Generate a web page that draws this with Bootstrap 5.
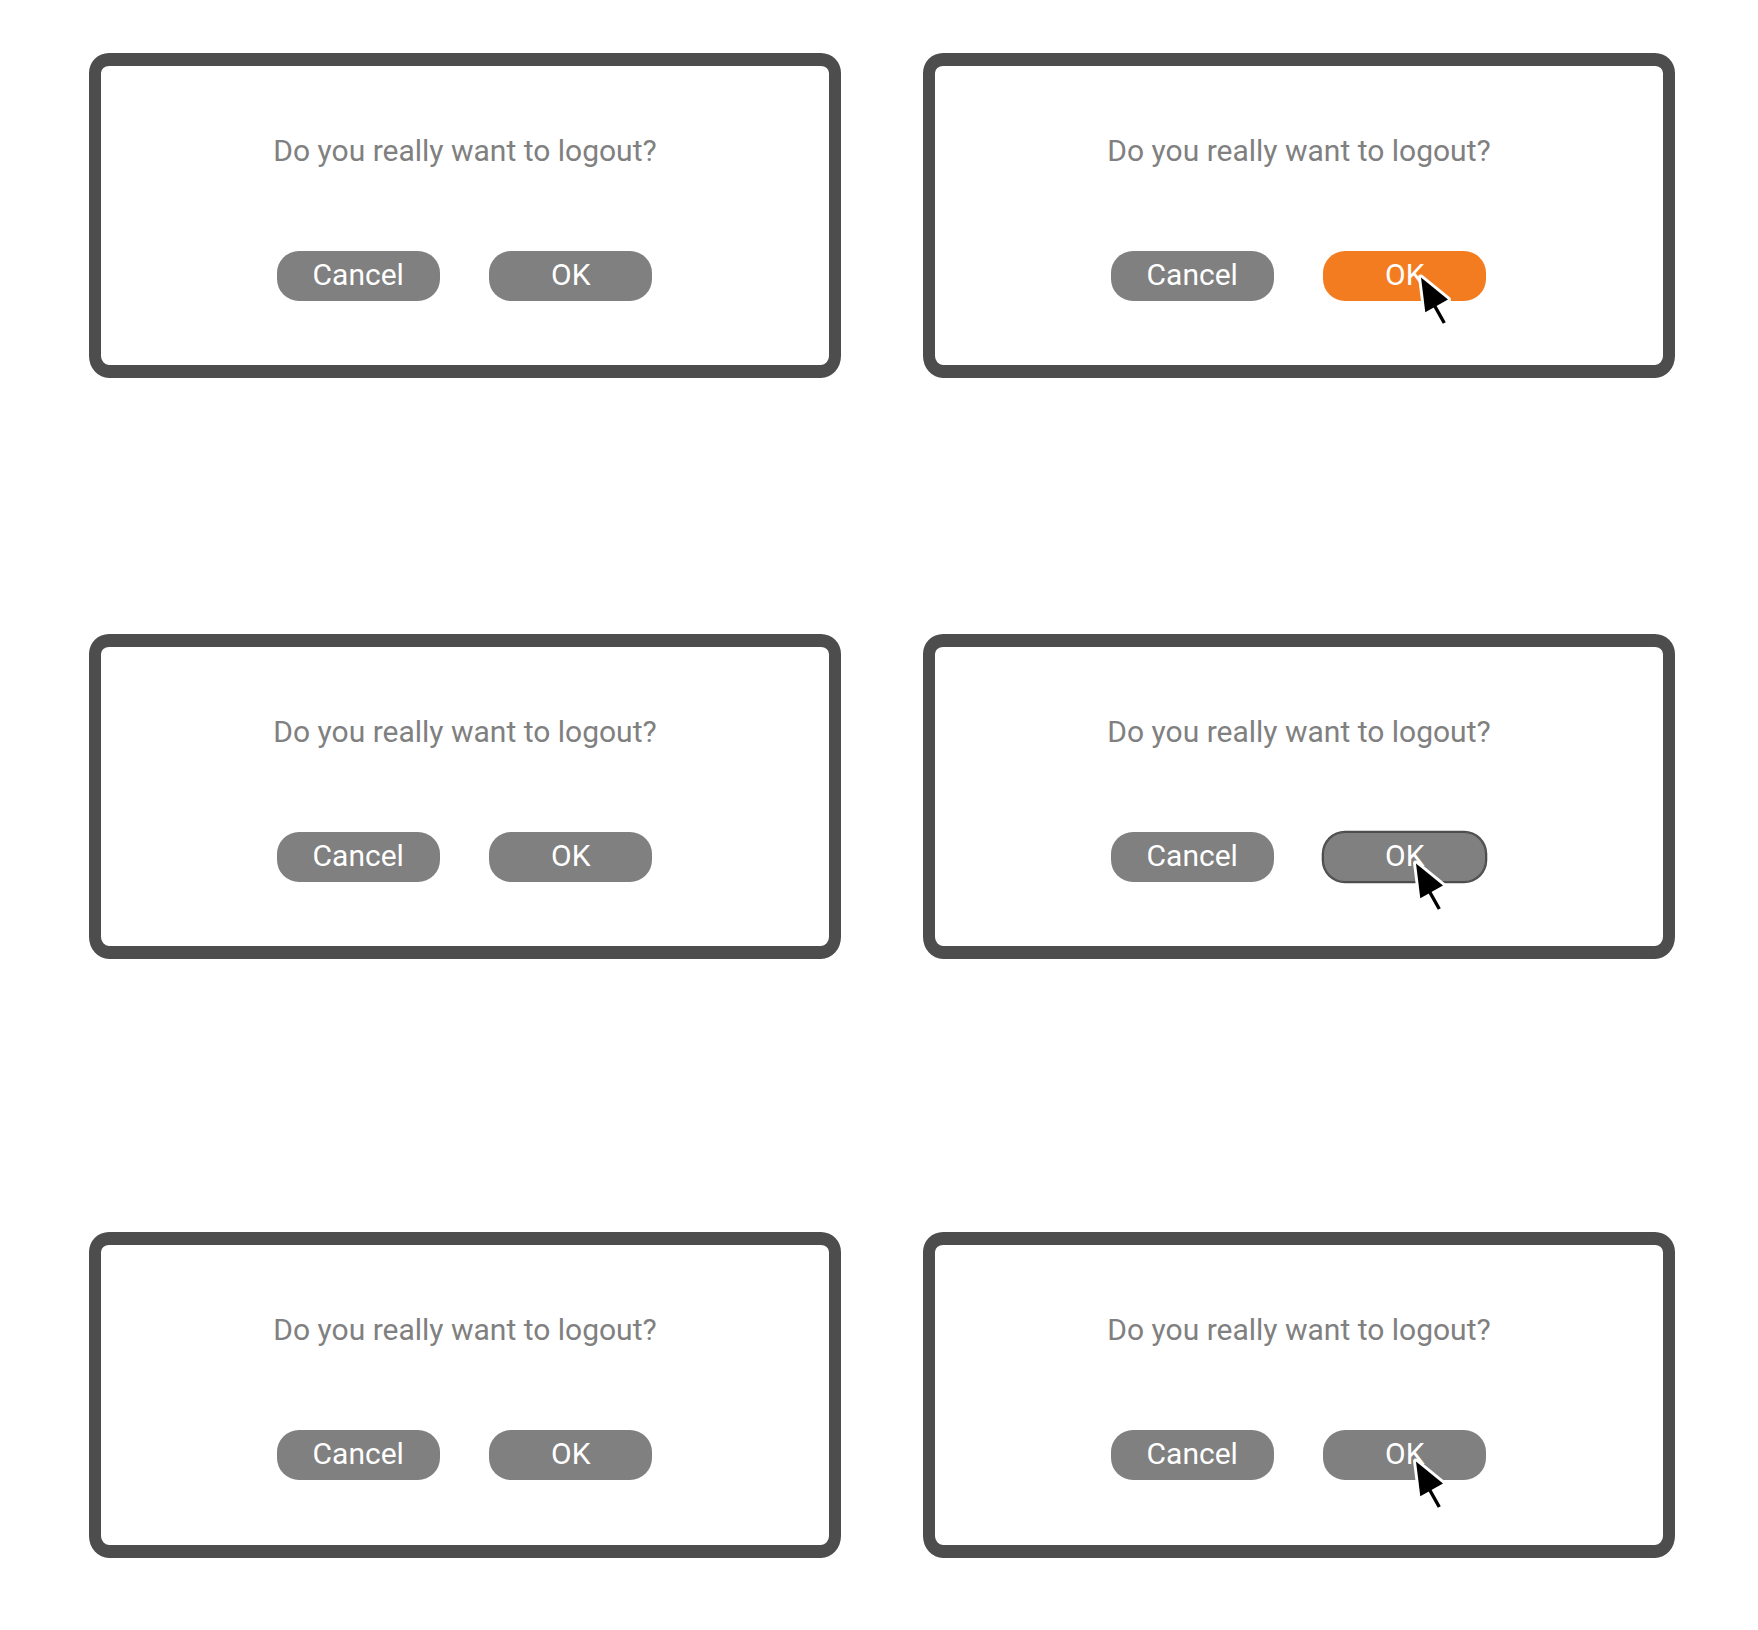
<!DOCTYPE html>
<html lang="en">
<head>
<meta charset="utf-8">
<title>Logout dialog states</title>
<link href="https://cdn.jsdelivr.net/npm/bootstrap@5.3.0/dist/css/bootstrap.min.css" rel="stylesheet">
<style>
body { font-family: Roboto, sans-serif; background: #fff; }
.sheet { display: grid; grid-template-columns: 752px 752px; column-gap: 82px; grid-template-rows: 580.8px 598.4px 326px; padding: 52.9px 0 0 89px; }
.dialog { width: 752px; height: 325.5px; border: solid #4d4d4d; border-width: 13px 12px; border-radius: 20px 20px 20px 20px / 20px 20px 22px 22px; }
.question { margin-top: 63px; font-size: 30px; line-height: 44px; color: #808080; white-space: nowrap; }
.actions { margin-top: 78px; margin-right: 1px; gap: 49.5px; }
.btn-pill { --bs-btn-color: #fff; --bs-btn-bg: #808080; --bs-btn-border-width: 0; --bs-btn-padding-x: 0; --bs-btn-padding-y: 0; --bs-btn-border-radius: 22px; --bs-btn-hover-color: #fff; --bs-btn-hover-bg: #808080; width: 163px; height: 50px; font-size: 30px; line-height: 46px; padding-bottom: 2px; }
.btn-orange { --bs-btn-bg: #f47c20; --bs-btn-hover-bg: #f47c20; }
.btn-ring { box-shadow: inset 0 0 0 1px #4d4d4d, 0 0 0 1.3px #4d4d4d; }
.pointer { left: 92px; top: 18px; z-index: 2; overflow: visible; }
.pointer-low { left: 87px; top: 23px; }
</style>
<script src="https://cdn.jsdelivr.net/npm/bootstrap@5.3.0/dist/js/bootstrap.bundle.min.js"></script>
</head>
<body>
<svg class="d-none"><defs>
<symbol id="arrow" viewBox="0 0 40 60" overflow="visible">
<path d="M6 8.5 33 30.5 10.3 43.2Z" fill="#fff" stroke="#fff" stroke-width="5.8" stroke-linejoin="round"/>
<path d="M6 8.5 33 30.5 10.3 43.2Z" fill="#000"/>
<path d="M18 34 29.3 54" stroke="#000" stroke-width="3.4"/>
</symbol></defs></svg>
<main class="sheet">
<section class="dialog d-flex flex-column align-items-center"><p class="question mb-0">Do you really want to logout?</p><div class="actions d-flex"><button class="btn btn-pill">Cancel</button><button class="btn btn-pill">OK</button></div></section>
<section class="dialog d-flex flex-column align-items-center"><p class="question mb-0">Do you really want to logout?</p><div class="actions d-flex"><button class="btn btn-pill">Cancel</button><button class="btn btn-pill btn-orange position-relative">OK<svg class="pointer position-absolute" width="40" height="60"><use href="#arrow"/></svg></button></div></section>
<section class="dialog d-flex flex-column align-items-center"><p class="question mb-0">Do you really want to logout?</p><div class="actions d-flex"><button class="btn btn-pill">Cancel</button><button class="btn btn-pill">OK</button></div></section>
<section class="dialog d-flex flex-column align-items-center"><p class="question mb-0">Do you really want to logout?</p><div class="actions d-flex"><button class="btn btn-pill">Cancel</button><button class="btn btn-pill btn-ring position-relative">OK<svg class="pointer pointer-low position-absolute" width="40" height="60"><use href="#arrow"/></svg></button></div></section>
<section class="dialog d-flex flex-column align-items-center"><p class="question mb-0">Do you really want to logout?</p><div class="actions d-flex"><button class="btn btn-pill">Cancel</button><button class="btn btn-pill">OK</button></div></section>
<section class="dialog d-flex flex-column align-items-center"><p class="question mb-0">Do you really want to logout?</p><div class="actions d-flex"><button class="btn btn-pill">Cancel</button><button class="btn btn-pill position-relative">OK<svg class="pointer pointer-low position-absolute" width="40" height="60"><use href="#arrow"/></svg></button></div></section>
</main>
</body>
</html>
